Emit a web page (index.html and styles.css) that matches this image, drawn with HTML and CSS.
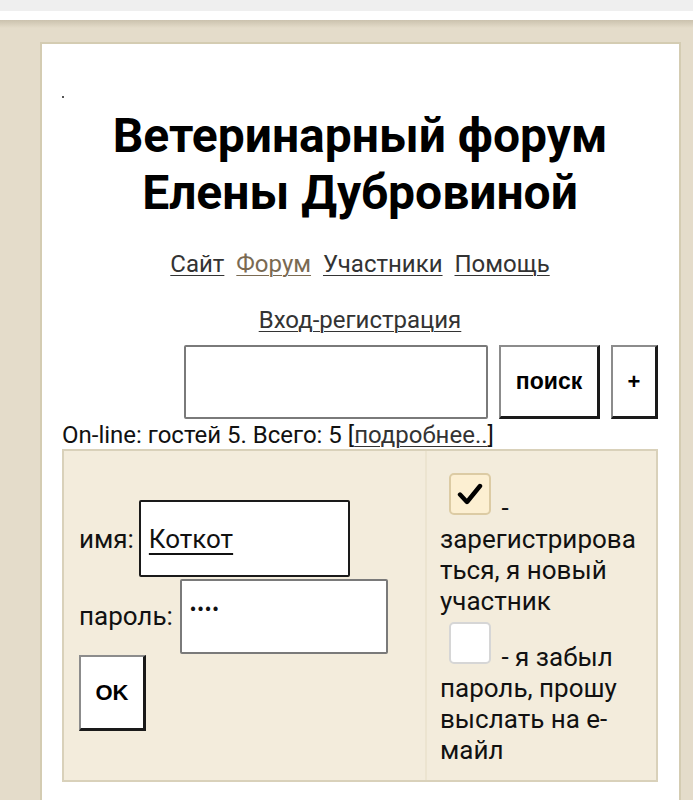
FILE: index.html
```html
<!DOCTYPE html>
<html lang="ru">
<head>
<meta charset="utf-8">
<link rel="stylesheet" href="styles.css">
</head>
<body>
<div class="topbar"></div>
<div class="whitebar"></div>
<div class="bg">
  <div class="card">
    <div class="dot"></div>
    <h1 class="title">Ветеринарный форум<br>Елены Дубровиной</h1>
    <nav class="nav">
      <a href="#" class="link">Сайт</a>
      <a href="#" class="link current">Форум</a>
      <a href="#" class="link">Участники</a>
      <a href="#" class="link">Помощь</a>
    </nav>
    <div class="enter"><a href="#" class="link">Вход-регистрация</a></div>
    <div class="search">
      <div class="sinput"></div>
      <div class="btn btn-search">поиск</div>
      <div class="btn btn-plus">+</div>
    </div>
    <div class="online">On-line: гостей 5. Всего: 5 [<a href="#" class="link">подробнее..</a>]</div>
    <div class="login">
      <div class="lcell">
        <div class="row">
          <span class="lbl">имя:</span>
          <div class="inp inp-name"><span class="val">Коткот</span></div>
        </div>
        <div class="row">
          <span class="lbl">пароль:</span>
          <div class="inp inp-pass"><span class="dots">••••</span></div>
        </div>
        <div class="btn btn-ok">OK</div>
      </div>
      <div class="rcell">
        <p class="opt"><span class="cb cb-on"><svg class="tick" width="26" height="26" viewBox="0 0 26 26"><path d="M3 13.5 L10 21 L23 5" fill="none" stroke="#000" stroke-width="4.4" stroke-linecap="round" stroke-linejoin="round"/></svg></span> - зарегистрироваться, я новый участник</p>
        <p class="opt"><span class="cb"></span> - я забыл пароль, прошу выслать на е-майл</p>
      </div>
    </div>
  </div>
</div>
</body>
</html>
```

FILE: styles.css
```css
html, body {
  margin: 0;
  padding: 0;
  background: #e4dcca;
  font-family: Roboto, "Noto Sans", "Liberation Sans", sans-serif;
  color: #111;
  overflow: hidden;
}
.topbar {
  height: 11px;
  background: #efefef;
}
.whitebar {
  height: 9px;
  background: #ffffff;
}
.bg {
  background: linear-gradient(#cbc2ae 0, #e4dcca 8px, #e4dcca 100%);
  padding: 22px 12px 0 40px;
  height: 780px;
  box-sizing: border-box;
  overflow: hidden;
}
.card {
  background: #fff;
  border: 2px solid #d4ccb2;
  border-bottom: none;
  padding: 0 21px 0 20px;
  height: 758px;
  box-sizing: border-box;
  overflow: hidden;
}
.dot {
  width: 2px;
  height: 2px;
  background: #555;
  margin: 52px 0 0 0;
}
.title {
  margin: 9px 0 0 0;
  text-align: center;
  font-size: 48px;
  line-height: 57px;
  font-weight: 700;
  color: #000;
}
.nav {
  margin-top: 28px;
  text-align: center;
  font-size: 24px;
  line-height: 30px;
}
.nav .link {
  margin: 0 3px;
}
.link {
  color: #333;
  text-decoration: underline;
  text-underline-offset: 3px;
  text-decoration-thickness: 1px;
}
.link.current {
  color: #7a6a52;
}
.enter {
  margin-top: 26px;
  text-align: center;
  font-size: 24px;
  line-height: 30px;
}
.search {
  margin-top: 10px;
  display: flex;
  justify-content: flex-end;
  gap: 11px;
}
.sinput {
  width: 304px;
  height: 74px;
  box-sizing: border-box;
  border: 2px solid #7a7a7a;
  border-radius: 2px;
  background: #fff;
}
.btn {
  display: flex;
  align-items: center;
  justify-content: center;
  background: #fff;
  border-style: solid;
  border-width: 2px 3px 3px 2px;
  border-color: #8c8c8c #1a1a1a #1a1a1a #8c8c8c;
  font-family: "Liberation Sans", Arial, sans-serif;
  font-weight: 700;
  color: #000;
  box-sizing: border-box;
}
.btn-search {
  width: 101px;
  height: 74px;
  font-size: 23px;
}
.btn-plus {
  width: 47px;
  height: 74px;
  font-size: 22px;
}
.online {
  font-size: 24px;
  line-height: 27px;
  margin-top: 3px;
  color: #111;
}
.online .link {
  text-underline-offset: 3px;
}
.login {
  margin-top: 0;
  display: grid;
  grid-template-columns: 363px 1fr;
  background: #f3ecdc;
  border: 2px solid #d9d1ba;
}
.lcell {
  display: flex;
  flex-direction: column;
  justify-content: center;
  padding: 0 0 0 15px;
  border-right: 2px solid #ece4d0;
}
.row {
  display: flex;
  align-items: center;
  gap: 5px;
}
.lbl {
  font-size: 26px;
  color: #111;
}
.inp {
  background: #fff;
  border-radius: 2px;
  box-sizing: border-box;
  display: flex;
  align-items: center;
  padding-left: 8px;
  font-size: 26px;
}
.inp-name {
  width: 211px;
  height: 77px;
  border: 2px solid #1a1a1a;
}
.inp-pass {
  width: 208px;
  height: 75px;
  border: 2px solid #7a7a7a;
  align-items: flex-start;
  padding-top: 18px;
  margin-top: 2px;
  margin-left: 2px;
}
.val {
  text-decoration: underline;
  text-underline-offset: 5px;
  text-decoration-thickness: 2px;
}
.dots {
  font-size: 18px;
  letter-spacing: 1px;
  font-weight: 700;
}
.btn-ok {
  width: 67px;
  height: 76px;
  font-size: 22px;
  margin-top: 1px;
}
.rcell {
  padding: 22px 12px 14px 13px;
  font-size: 26px;
  line-height: 31px;
  overflow-wrap: anywhere;
  color: #111;
}
.opt {
  margin: 0;
}
.opt + .opt {
  margin-top: 5px;
}
.cb {
  display: inline-block;
  overflow: hidden;
  width: 42px;
  height: 42px;
  box-sizing: border-box;
  border: 2px solid #d6d6d6;
  border-radius: 5px;
  background: #fff;
  margin: 0 4px 2px 9px;
  vertical-align: baseline;
}
.cb-on {
  background: #fcefd2;
  border-color: #dccba4;
}
.tick {
  display: block;
  margin: 6px auto 0;
}
```
